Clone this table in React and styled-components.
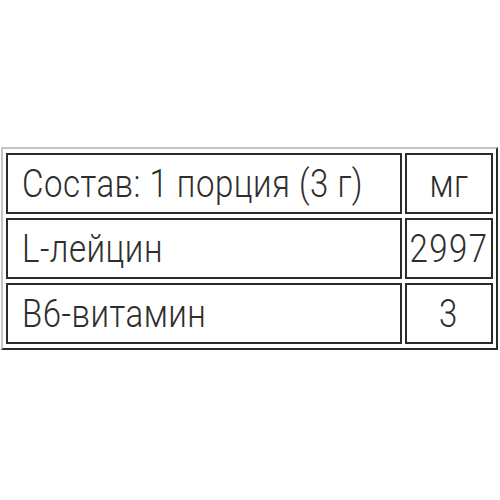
import React from "react";
import styled, { createGlobalStyle } from "styled-components";

const Global = createGlobalStyle`
  html, body { margin: 0; padding: 0; background: #fff; }
  body { font-family: Roboto, "Liberation Sans", sans-serif; }
`;

const Page = styled.div`
  width: 500px;
  height: 500px;
  padding: 147px 0 0 1px;
  box-sizing: border-box;
`;

const Table = styled.table`
  border-collapse: separate;
  border-spacing: 3px 4px;
  border-style: solid;
  border-width: 2px;
  border-color: #c4c4c4 #2a2a2a #2a2a2a #c4c4c4;
  width: 497px;
  padding: 0;
`;

const Cell = styled.td`
  border: 2px solid #2b2b2b;
  height: 57px;
  padding: 0;
  padding-left: ${(p) => (p.$center ? "0" : "14px")};
  font-size: 33px;
  font-weight: 300;
  color: #2e2e2e;
  text-align: ${(p) => (p.$center ? "center" : "left")};
  width: ${(p) => (p.$narrow ? "84px" : "auto")};
  vertical-align: middle;
  white-space: nowrap;
  line-height: 1;
`;

const Text = styled.span`
  display: inline-block;
  transform: scaleY(1.2);
  letter-spacing: ${(p) => (p.$num ? "1.5px" : "0.5px")};
`;

const rows = [
  ["Состав: 1 порция (3 г)", "мг"],
  ["L-лейцин", "2997"],
  ["B6-витамин", "3"],
];

export default function App() {
  return (
    <>
      <Global />
      <Page>
        <Table>
          <tbody>
            {rows.map(([a, b]) => (
              <tr key={a}>
                <Cell><Text>{a}</Text></Cell>
                <Cell $center $narrow><Text $num={/\d/.test(b)}>{b}</Text></Cell>
              </tr>
            ))}
          </tbody>
        </Table>
      </Page>
    </>
  );
}
